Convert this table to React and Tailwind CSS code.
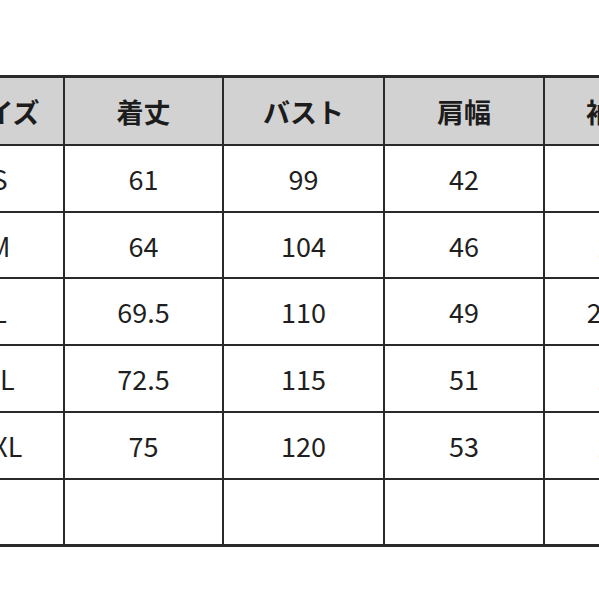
import React from "react";

const headers = ["サイズ", "着丈", "バスト", "肩幅", "袖丈"];
const rows = [
  ["S", "61", "99", "42", "19"],
  ["M", "64", "104", "46", "20"],
  ["L", "69.5", "110", "49", "21.5"],
  ["XL", "72.5", "115", "51", "22"],
  ["XXL", "75", "120", "53", "23"],
  ["", "", "", "", ""],
];

export default function App() {
  return (
    <div
      className="w-[599px] h-[599px] overflow-hidden bg-white pt-[75px]"
      style={{ fontFamily: '"Noto Sans CJK JP", "Noto Sans", sans-serif' }}
    >
      <div className="ml-[-64px] w-[760px] bg-[#2a2a2a] pt-[3px] pb-[3px] grid grid-cols-[127px_157px_159px_158px_136px] grid-rows-[66px_65px_64px_65px_65px_65px_64px] gap-[2px]">
        {headers.map((h) => (
          <div
            key={h}
            className="bg-[#d2d2d2] flex items-center justify-center text-[27px] font-bold text-[#1c1c1c] leading-none"
          >
            {h}
          </div>
        ))}
        {rows.map((r, i) =>
          r.map((c, j) => (
            <div
              key={i + "-" + j}
              className="bg-white flex items-center justify-center text-[27px] text-[#1f1f1f] leading-none"
            >
              {c}
            </div>
          ))
        )}
      </div>
    </div>
  );
}
